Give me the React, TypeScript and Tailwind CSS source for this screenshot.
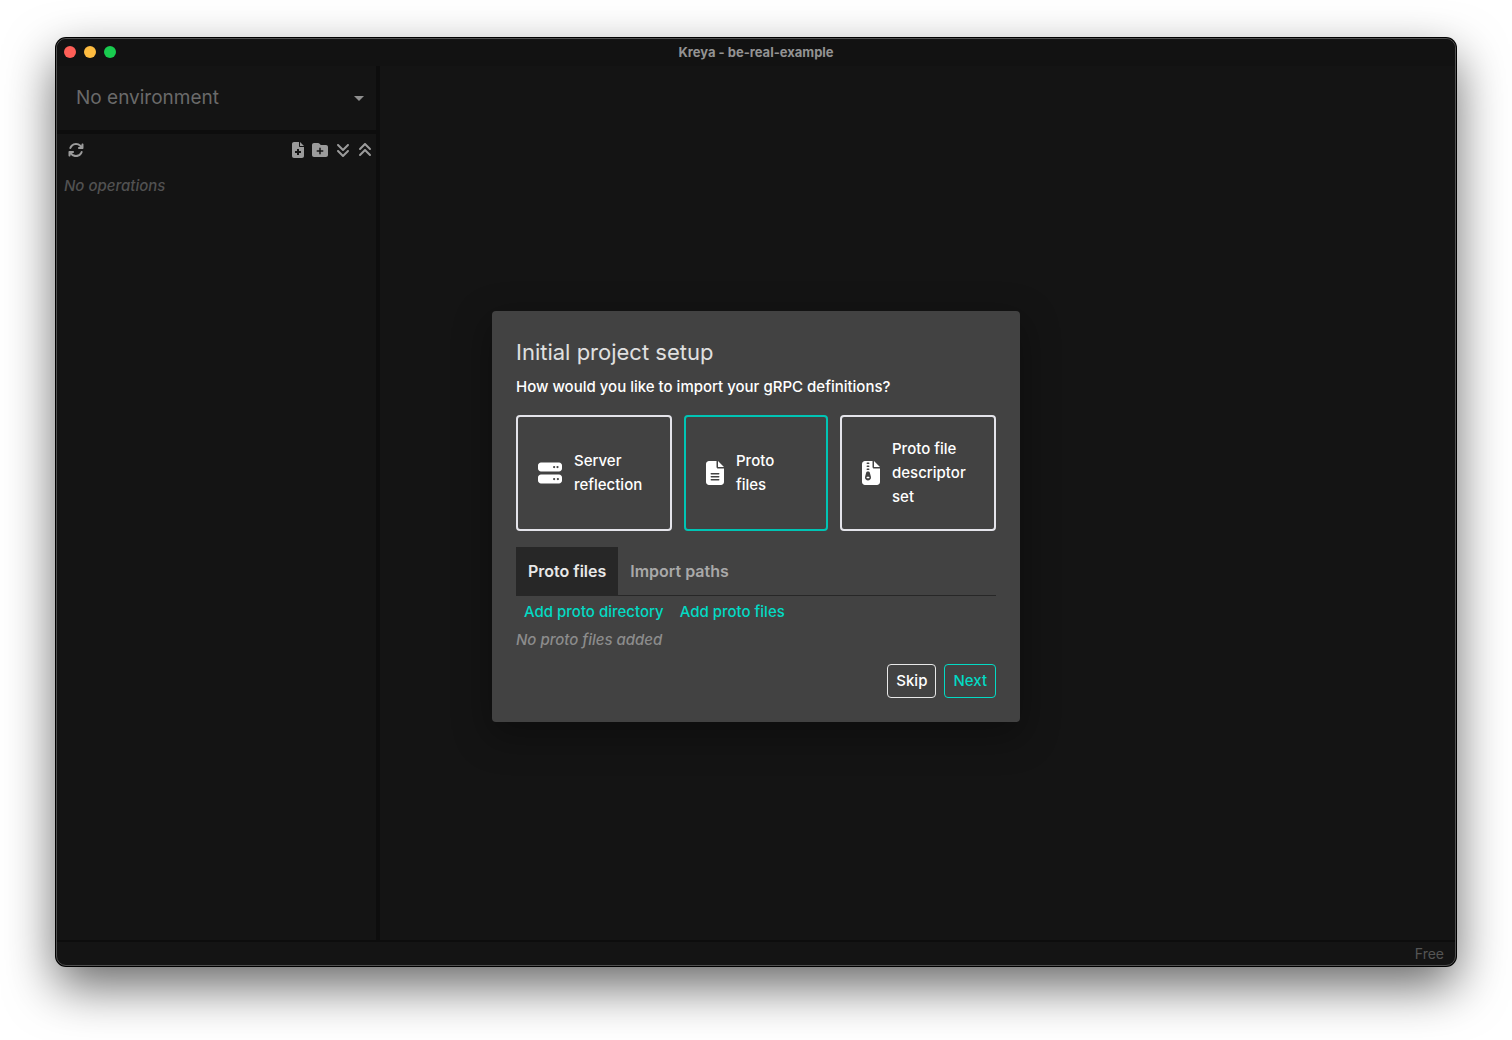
import { useState } from "react";
import {
  FaAnglesDown,
  FaAnglesUp,
  FaArrowsRotate,
  FaFileLines,
  FaFileZipper,
  FaFolderPlus,
  FaServer,
} from "react-icons/fa6";

function FilePlusIcon() {
  return (
    <svg className="h-4 w-3" viewBox="0 0 384 512" fill="currentColor" aria-hidden="true">
      <path
        fillRule="evenodd"
        d="M64 0C28.7 0 0 28.7 0 64V448c0 35.3 28.7 64 64 64H320c35.3 0 64-28.7 64-64V160H256c-17.7 0-32-14.3-32-32V0H64zM256 0V128H384L256 0zM160 224h64v64h64v64h-64v64h-64v-64H96v-64h64z"
      />
    </svg>
  );
}

function TitleBar() {
  return (
    <header className="grid h-[27px] shrink-0 grid-cols-[1fr_auto_1fr] items-center bg-[#121212] px-[7px] pb-0.5">
      <div className="flex gap-2">
        <button aria-label="Close" className="size-3 rounded-full bg-[#ff5f57]" />
        <button aria-label="Minimize" className="size-3 rounded-full bg-[#febc40]" />
        <button aria-label="Zoom" className="size-3 rounded-full bg-[#19cc4f]" />
      </div>
      <h1 className="text-[13px] leading-4 font-bold text-[#939393]">Kreya - be-real-example</h1>
    </header>
  );
}

function Sidebar() {
  return (
    <aside className="flex w-[323px] shrink-0 flex-col border-r-4 border-[#0d0d0d]">
      <div className="relative flex h-[68px] items-center border-b-4 border-[#0d0d0d]">
        <select
          aria-label="Environment"
          className="h-full w-full appearance-none bg-transparent px-[19px] text-[19px] text-[#6a6a6a] outline-none"
        >
          <option>No environment</option>
        </select>
        <svg
          className="pointer-events-none absolute right-3 h-[5px] w-[10px] text-[#8f8f8f]"
          viewBox="0 0 10 5"
          fill="currentColor"
          aria-hidden="true"
        >
          <path d="M0 0h10L5 5z" />
        </svg>
      </div>
      <div className="flex h-8 items-center justify-between pr-1 pl-[11px] text-base text-[#9b9b9b]">
        <button aria-label="Refresh">
          <FaArrowsRotate />
        </button>
        <div className="flex items-center gap-2">
          <button aria-label="Add operation">
            <FilePlusIcon />
          </button>
          <button aria-label="Add folder">
            <FaFolderPlus />
          </button>
          <button aria-label="Expand all">
            <FaAnglesDown className="w-[14px]" />
          </button>
          <button aria-label="Collapse all">
            <FaAnglesUp className="w-[14px]" />
          </button>
        </div>
      </div>
      <p className="mt-2 px-[7px] text-[15px] leading-6 font-medium text-[#515151] italic">
        No operations
      </p>
    </aside>
  );
}

const sources = [
  { id: "reflection", label: "Server reflection", icon: <FaServer className="h-6 w-6 shrink-0" /> },
  { id: "files", label: "Proto files", icon: <FaFileLines className="h-6 w-[18px] shrink-0" /> },
  {
    id: "descriptor",
    label: "Proto file descriptor set",
    icon: <FaFileZipper className="h-6 w-[18px] shrink-0" />,
  },
];

function SetupDialog() {
  const [source, setSource] = useState("files");
  const [tab, setTab] = useState("Proto files");

  return (
    <section
      role="dialog"
      aria-labelledby="setup-title"
      className="w-[528px] rounded bg-[#424242] p-6 text-[15px] leading-6 font-medium text-white shadow-[0_12px_36px_4px_rgba(0,0,0,0.3)]"
    >
      <h2 id="setup-title" className="mb-[6px] text-[22px] leading-[34px] font-normal text-[#e0e0e0]">
        Initial project setup
      </h2>
      <p>How would you like to import your gRPC definitions?</p>

      <div className="mt-4 grid grid-cols-[13fr_12fr_13fr] gap-3">
        {sources.map((s) => (
          <button
            key={s.id}
            aria-pressed={source === s.id}
            onClick={() => setSource(s.id)}
            className={
              "flex h-[116px] items-center gap-3 rounded border-2 px-5 text-left " +
              (source === s.id ? "border-[#00c4b4]" : "border-[#e4e4ea]")
            }
          >
            {s.icon}
            <span>{s.label}</span>
          </button>
        ))}
      </div>

      <div role="tablist" className="mt-4 flex border-b border-[#272727]">
        {["Proto files", "Import paths"].map((t) => (
          <button
            key={t}
            role="tab"
            aria-selected={tab === t}
            onClick={() => setTab(t)}
            className={
              "h-12 px-3 text-base font-semibold " +
              (tab === t ? "bg-[#272727] text-[#e8e8e8]" : "text-[#a9a9a9]")
            }
          >
            {t}
          </button>
        ))}
      </div>

      <div className="mt-1 flex gap-4 px-2 text-[#03dac4]">
        <button>Add proto directory</button>
        <button>Add proto files</button>
      </div>
      <p className="mt-1 text-[#8c8c8c] italic">No proto files added</p>

      <div className="mt-3 flex justify-end gap-2">
        <button className="h-[34px] rounded border border-[#e8e8e8] px-2">Skip</button>
        <button className="h-[34px] rounded border border-[#03dac4] px-2 text-[#03dac4]">
          Next
        </button>
      </div>
    </section>
  );
}

export default function App() {
  return (
    <div className="flex h-screen bg-white px-14 pt-[38px] pb-[74px] font-['Inter',sans-serif]">
      <div className="relative flex flex-1 flex-col overflow-hidden rounded-[10px] border border-[#505050] bg-[#141414] shadow-[0_0_0_1px_#000,0_20px_50px_rgba(0,0,0,0.6)]">
        <TitleBar />
        <div className="flex flex-1">
          <Sidebar />
          <main className="flex-1" />
        </div>
        <footer className="flex h-[25px] shrink-0 items-center justify-end border-t-2 border-[#0d0d0d] px-[11px] text-sm text-[#555]">
          Free
        </footer>
        <div className="absolute inset-x-0 top-[29px] bottom-0 flex items-center justify-center">
          <SetupDialog />
        </div>
      </div>
    </div>
  );
}
